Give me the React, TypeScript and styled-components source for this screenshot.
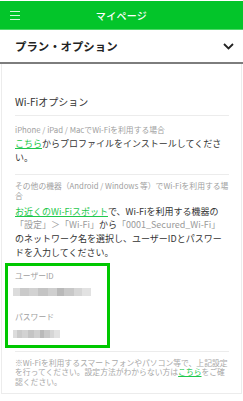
import styled, { createGlobalStyle } from "styled-components";

const GlobalStyle = createGlobalStyle`
  body {
    margin: 0;
    padding-top: 1px;
    background: #fff;
    font-family: "Noto Sans CJK JP", "Noto Sans", sans-serif;
    color: #333;
  }
`;

export default function App() {
  return (
    <>
      <GlobalStyle />
      <Header>
        <MenuButton aria-label="menu">
          <span />
          <span />
          <span />
        </MenuButton>
        <Title>マイページ</Title>
        <div />
      </Header>
      <SectionRow>
        <SectionTitle>プラン・オプション</SectionTitle>
        <svg width="11" height="7" viewBox="0 0 11 7">
          <polyline points="1,1 5.5,5.5 10,1" fill="none" stroke="#222" strokeWidth="1.8" />
        </svg>
      </SectionRow>
      <Panel>
        <Heading>Wi-Fiオプション</Heading>
        <Note>iPhone / iPad / MacでWi-Fiを利用する場合</Note>
        <Body>
          <Link>こちら</Link>からプロファイルをインストールしてください。
        </Body>
        <Divider />
        <Note $top={6}>その他の機器（Android / Windows 等）でWi-Fiを利用する場合</Note>
        <Body $top={4}>
          <Link>お近くのWi-Fiスポット</Link>で、Wi-Fiを利用する機器の<Muted>「設定」＞「Wi-Fi」</Muted>から<Muted>「0001_Secured_Wi-Fi」</Muted>のネットワーク名を選択し、ユーザーIDとパスワードを入力してください。
        </Body>
        <Highlight>
          <Note $top={0}>ユーザーID</Note>
          <Mosaic $width={78} $top={7} />
          <Note $top={16}>パスワード</Note>
          <Mosaic $width={47} $top={8} />
        </Highlight>
        <Divider $top={3} />
        <Footnote>
          ※Wi-Fiを利用するスマートフォンやパソコン等で、上記設定を行ってください。設定方法がわからない方は<Link>こちら</Link>をご確認ください。
        </Footnote>
      </Panel>
    </>
  );
}

const Header = styled.header`
  display: grid;
  grid-template-columns: 40px 1fr 40px;
  align-items: center;
  height: 28px;
  background: #03c52a;
  border-bottom: 1px solid #4fd86a;
`;

const MenuButton = styled.div`
  display: flex;
  flex-direction: column;
  gap: 3px;
  padding-left: 10px;

  span {
    display: block;
    width: 10px;
    height: 1px;
    background: rgba(255, 255, 255, 0.85);
  }
`;

const Title = styled.h1`
  margin: 0;
  text-align: center;
  font-size: 10px;
  font-weight: 500;
  color: #fff;
  letter-spacing: 0.3px;
`;

const SectionRow = styled.div`
  display: flex;
  justify-content: space-between;
  align-items: center;
  height: 32px;
  padding: 0 9px 0 15px;
  border-bottom: 2px solid #7d7d7d;
`;

const SectionTitle = styled.h2`
  margin: 0;
  font-size: 11.4px;
  font-weight: 700;
  color: #222;
`;

const Panel = styled.section`
  margin: 0 1px;
  padding: 31px 12px 6px 13px;
  border: 1px solid #ececec;
  border-top: none;
`;

const Heading = styled.div`
  font-size: 10px;
  line-height: 14px;
  color: #333;
  padding-bottom: 6px;
  border-bottom: 1px solid #ececec;
`;

const Note = styled.div<{ $top?: number }>`
  margin-top: ${(p) => p.$top ?? 9}px;
  font-size: 7.8px;
  line-height: 10px;
  color: #a0a0a0;
`;

const Body = styled.p<{ $top?: number }>`
  margin: ${(p) => p.$top ?? 2}px 0 0;
  font-size: 9px;
  line-height: 13.8px;
  color: #333;
`;

const Link = styled.a`
  color: #1ec84c;
  text-decoration: underline;
`;

const Muted = styled.span`
  color: #9a9a9a;
`;

const Divider = styled.hr<{ $top?: number }>`
  margin: ${(p) => p.$top ?? 9}px 0 0;
  border: none;
  border-top: 1px solid #ececec;
`;

const Highlight = styled.div`
  width: 92px;
  margin: 3px 0 0 -10px;
  padding: 5px 0 7px 7px;
  border: 3px solid #00c800;
`;

const Mosaic = styled.div<{ $width: number; $top: number }>`
  width: ${(p) => p.$width}px;
  height: 8px;
  margin: ${(p) => p.$top}px 0 0 -2px;
  background: linear-gradient(
    to right,
    #dcdcdc 0 9%,
    #cacaca 9% 20%,
    #d2d2d2 20% 32%,
    #c4c4c4 32% 45%,
    #cfcfcf 45% 57%,
    #b9b9b9 57% 66%,
    #c8c8c8 66% 78%,
    #d6d6d6 78% 88%,
    #e2e2e2 88% 100%
  );
`;

const Footnote = styled.p`
  margin: 6px 0 0;
  font-size: 7.8px;
  line-height: 9.7px;
  color: #a8a8a8;
`;
